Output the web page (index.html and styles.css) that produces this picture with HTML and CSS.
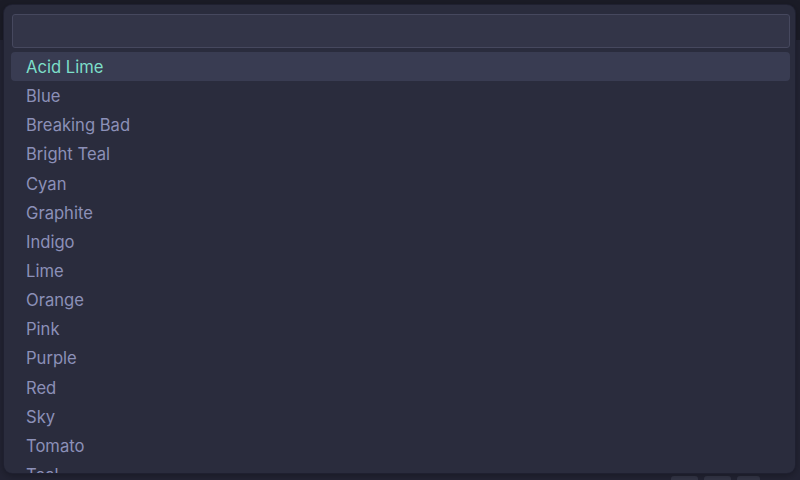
FILE: index.html
```html
<!DOCTYPE html>
<html>
<head>
<meta charset="utf-8">
<link rel="stylesheet" href="styles.css">
</head>
<body>
<div class="app">
  <div class="topbar"></div>
  <div class="main"></div>
  <div class="footer">
    <span class="fbtn"></span>
    <span class="fbtn"></span>
    <span class="fbtn small"></span>
  </div>
</div>
<div class="palette">
  <div class="search"><input class="search-input" type="text"></div>
  <ul class="list">
    <li class="item selected">Acid Lime</li>
    <li class="item">Blue</li>
    <li class="item">Breaking Bad</li>
    <li class="item">Bright Teal</li>
    <li class="item">Cyan</li>
    <li class="item">Graphite</li>
    <li class="item">Indigo</li>
    <li class="item">Lime</li>
    <li class="item">Orange</li>
    <li class="item">Pink</li>
    <li class="item">Purple</li>
    <li class="item">Red</li>
    <li class="item">Sky</li>
    <li class="item">Tomato</li>
    <li class="item">Teal</li>
  </ul>
</div>
</body>
</html>
```
FILE: styles.css
```css
html, body {
  margin: 0;
  padding: 0;
  width: 800px;
  height: 480px;
  overflow: hidden;
  background: #222332;
  font-family: Inter, "Noto Sans", sans-serif;
}
.app {
  display: flex;
  flex-direction: column;
  height: 480px;
}
.topbar {
  height: 40px;
  background: #1b1c27;
  flex: none;
}
.main {
  flex: 1;
  background: #232434;
}
.footer {
  height: 4px;
  display: flex;
  gap: 6px;
  padding-right: 40px;
  justify-content: flex-end;
  background: #232434;
}
.fbtn {
  width: 27px;
  height: 6px;
  background: #343647;
  border-radius: 3px 3px 0 0;
}
.fbtn.small { width: 23px; }
.palette {
  position: absolute;
  left: 4px;
  top: 5px;
  width: 791px;
  height: 468px;
  box-sizing: border-box;
  background: #2a2c3d;
  border-radius: 8px;
  box-shadow: 0 0 0 1px #1f2030, 0 2px 8px rgba(0,0,0,0.35);
  overflow: hidden;
  padding: 9px 5px 0 7px;
}
.search {
  padding: 0 0 0 1px;
}
.search-input {
  display: block;
  width: 100%;
  height: 34px;
  box-sizing: border-box;
  margin: 0;
  background: #333548;
  border: 1px solid #46485e;
  border-radius: 3px;
  outline: none;
  color: #c8cbe6;
  font: inherit;
}
.list {
  list-style: none;
  margin: 4px 0 0;
  padding: 0;
}
.item {
  box-sizing: border-box;
  height: 29.15px;
  padding-top: 1px;
  line-height: 28px;
  padding-left: 15px;
  font-size: 16.6px;
  color: #8c90b8;
  border-radius: 4px;
  white-space: nowrap;
}
.item.selected {
  background: #393c52;
  color: #7ddfc9;
}
```
